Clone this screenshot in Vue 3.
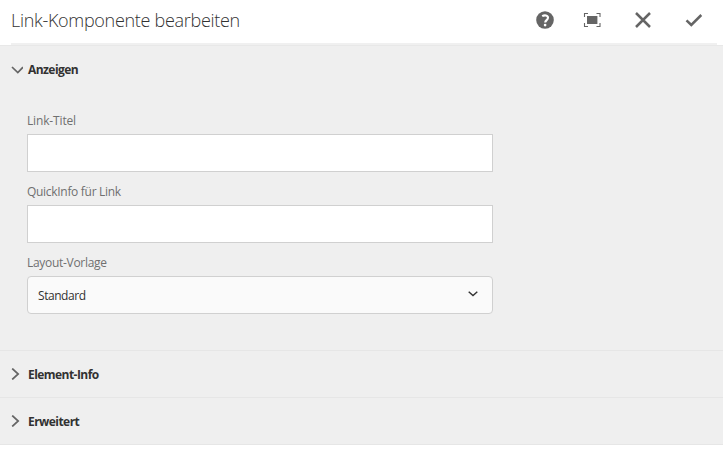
<script setup>
import { ref } from 'vue'

const title = ref('')
const tooltip = ref('')
const collapsed = ['Element-Info', 'Erweitert']
</script>

<template>
  <div class="dialog">
    <header class="header">
      <h1>Link-Komponente bearbeiten</h1>
      <div class="actions">
        <svg viewBox="0 0 18 18" width="18" height="18">
          <circle cx="9" cy="9" r="8.8" fill="#656565" />
          <path d="M6.2 5.2C8.5 3.8 12 4.1 12 6.8C12 9 9.2 9.3 9.2 11.6" fill="none" stroke="#fff" stroke-width="2.1" />
          <circle cx="9.1" cy="14.1" r="1.35" fill="#fff" />
        </svg>
        <svg viewBox="0 0 18 18" width="18" height="18">
          <rect x="4" y="5" width="10.4" height="8" fill="#656565" />
          <path d="M1.5 6V2.5H5M13.5 2.5H17V6M17 12V15.5H13.5M5 15.5H1.5V12" fill="none" stroke="#656565" stroke-width="1.1" />
        </svg>
        <svg viewBox="0 0 18 18" width="18" height="18">
          <path d="M2 2L16 16M16 2L2 16" fill="none" stroke="#656565" stroke-width="2.5" />
        </svg>
        <svg viewBox="0 0 18 18" width="18" height="18">
          <path d="M1.5 9.3L6.3 14L16.3 4" fill="none" stroke="#656565" stroke-width="2.5" />
        </svg>
      </div>
    </header>
    <main class="accordion">
      <section class="open">
        <div class="section-head">
          <svg viewBox="0 0 12 12" width="12" height="12">
            <path d="M1 3L6.8 8.6L12 3.2" fill="none" stroke="#656565" stroke-width="1.7" />
          </svg>
          <h2>Anzeigen</h2>
        </div>
        <div class="form">
          <label for="title">Link-Titel</label>
          <input id="title" v-model="title" type="text">
          <label for="tip">QuickInfo für Link</label>
          <input id="tip" v-model="tooltip" type="text">
          <span class="label">Layout-Vorlage</span>
          <button class="select" type="button">
            <span>Standard</span>
            <svg viewBox="0 0 10 6" width="10" height="6">
              <path d="M0.7 0.7L5 4.6L9.3 0.7" fill="none" stroke="#323232" stroke-width="1.4" />
            </svg>
          </button>
        </div>
      </section>
      <section v-for="item in collapsed" :key="item" class="closed">
        <div class="section-head">
          <svg viewBox="0 0 12 12" width="12" height="12">
            <path d="M1.2 0.5L7.2 6L1.2 11.5" fill="none" stroke="#656565" stroke-width="1.7" />
          </svg>
          <h2>{{ item }}</h2>
        </div>
      </section>
    </main>
  </div>
</template>

<style>
body {
  background: #fff;
}
</style>

<style scoped>
.dialog {
  height: 452px;
  font-family: "Open Sans", "Noto Sans", sans-serif;
  color: #323232;
}
.header {
  box-sizing: border-box;
  height: 45px;
  margin: 0 6px 0 11px;
  padding: 0 15px 3px 0;
  border-bottom: 2px solid #f0f0f0;
  display: flex;
  align-items: center;
  justify-content: space-between;
}
h1 {
  margin: 0;
  font-size: 18px;
  line-height: 24px;
  font-weight: 300;
  letter-spacing: -0.3px;
  white-space: nowrap;
}
.actions {
  display: grid;
  grid-template-columns: 47px 51px 51px 18px;
  margin-right: -1px;
}
svg {
  display: block;
  flex: none;
}
.accordion {
  background: #efefef;
}
section {
  box-sizing: border-box;
  border-bottom: 1px solid #e6e6e6;
}
.open {
  height: 306px;
  border-top: 1px solid #e8e8e8;
}
.closed {
  height: 47px;
}
.section-head {
  height: 46px;
  display: flex;
  align-items: center;
  gap: 5px;
  padding-left: 11px;
}
.open .section-head {
  height: 47px;
}
h2 {
  margin: 0;
  font-size: 12px;
  line-height: 18px;
  font-weight: 700;
  letter-spacing: -0.55px;
}
.closed h2 {
  padding-top: 2px;
}
.form {
  width: 466px;
  margin-left: 27px;
  padding-top: 19px;
}
label,
.label {
  display: block;
  width: max-content;
  height: 18px;
  line-height: 18px;
  margin-bottom: 4px;
  font-size: 12px;
  letter-spacing: -0.3px;
  color: #707070;
}
label:first-child {
  letter-spacing: -0.15px;
}
input,
.select {
  display: block;
  box-sizing: border-box;
  width: 466px;
  height: 38px;
  margin: 0 0 11px;
  border: 1px solid #d0d0d0;
  background: #fff;
  font: inherit;
  font-size: 12px;
  outline: none;
}
.select {
  display: flex;
  align-items: center;
  justify-content: space-between;
  padding: 0 14px 0 10px;
  border-radius: 4px;
  background: #fafafa;
  color: #323232;
  letter-spacing: -0.45px;
}
.select svg {
  margin-bottom: 2px;
}
</style>
